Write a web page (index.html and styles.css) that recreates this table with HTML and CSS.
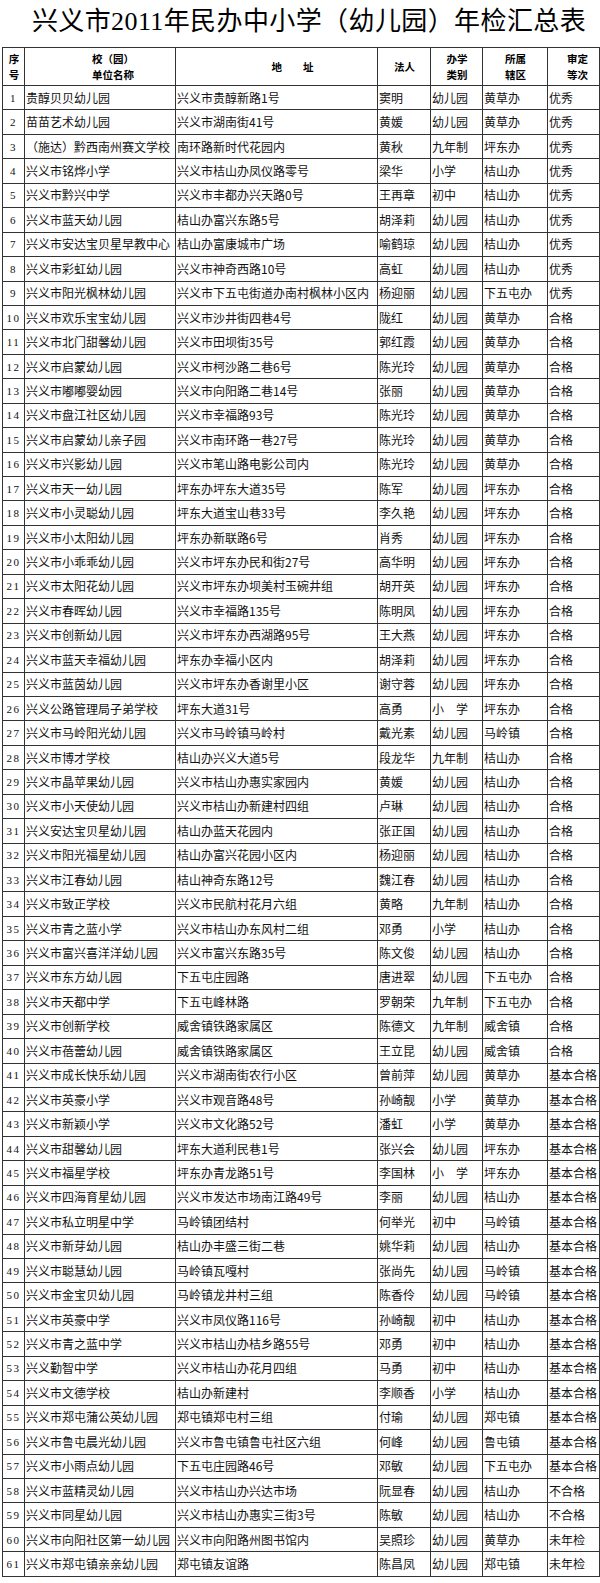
FILE: index.html
```html
<!DOCTYPE html>
<html lang="zh-CN">
<head>
<meta charset="utf-8">
<title>兴义市2011年民办中小学（幼儿园）年检汇总表</title>
<link rel="stylesheet" href="styles.css">
</head>
<body>
<div class="page">
<h1 class="title">兴义市2011年民办中小学（幼儿园）年检汇总表</h1>
<table class="sheet">
<colgroup>
<col class="c-no"><col class="c-name"><col class="c-addr"><col class="c-rep"><col class="c-type"><col class="c-area"><col class="c-grade">
</colgroup>
<thead>
<tr>
<th>序<br>号</th>
<th class="h-name">校（园）<br>单位名称</th>
<th class="h-addr">地　　址</th>
<th>法人</th>
<th>办学<br>类别</th>
<th>所属<br>辖区</th>
<th class="h-grade">审定<br>等次</th>
</tr>
</thead>
<tbody>
<tr><td class="no">1</td><td>贵醇贝贝幼儿园</td><td>兴义市贵醇新路1号</td><td>窦明</td><td>幼儿园</td><td>黄草办</td><td>优秀</td></tr>
<tr><td class="no">2</td><td>苗苗艺术幼儿园</td><td>兴义市湖南街41号</td><td>黄媛</td><td>幼儿园</td><td>黄草办</td><td>优秀</td></tr>
<tr><td class="no">3</td><td>（施达）黔西南州赛文学校</td><td>南环路新时代花园内</td><td>黄秋</td><td>九年制</td><td>坪东办</td><td>优秀</td></tr>
<tr><td class="no">4</td><td>兴义市铭烨小学</td><td>兴义市桔山办凤仪路零号</td><td>梁华</td><td>小学</td><td>桔山办</td><td>优秀</td></tr>
<tr><td class="no">5</td><td>兴义市黔兴中学</td><td>兴义市丰都办兴天路0号</td><td>王再章</td><td>初中</td><td>桔山办</td><td>优秀</td></tr>
<tr><td class="no">6</td><td>兴义市蓝天幼儿园</td><td>桔山办富兴东路5号</td><td>胡泽莉</td><td>幼儿园</td><td>桔山办</td><td>优秀</td></tr>
<tr><td class="no">7</td><td>兴义市安达宝贝星早教中心</td><td>桔山办富康城市广场</td><td>喻鹤琼</td><td>幼儿园</td><td>桔山办</td><td>优秀</td></tr>
<tr><td class="no">8</td><td>兴义市彩虹幼儿园</td><td>兴义市神奇西路10号</td><td>高虹</td><td>幼儿园</td><td>桔山办</td><td>优秀</td></tr>
<tr><td class="no">9</td><td>兴义市阳光枫林幼儿园</td><td>兴义市下五屯街道办南村枫林小区内</td><td>杨迎丽</td><td>幼儿园</td><td>下五屯办</td><td>优秀</td></tr>
<tr><td class="no">10</td><td>兴义市欢乐宝宝幼儿园</td><td>兴义市沙井街四巷4号</td><td>陇红</td><td>幼儿园</td><td>黄草办</td><td>合格</td></tr>
<tr><td class="no">11</td><td>兴义市北门甜馨幼儿园</td><td>兴义市田坝街35号</td><td>郭红霞</td><td>幼儿园</td><td>黄草办</td><td>合格</td></tr>
<tr><td class="no">12</td><td>兴义市启蒙幼儿园</td><td>兴义市柯沙路二巷6号</td><td>陈光玲</td><td>幼儿园</td><td>黄草办</td><td>合格</td></tr>
<tr><td class="no">13</td><td>兴义市嘟嘟婴幼园</td><td>兴义市向阳路二巷14号</td><td>张丽</td><td>幼儿园</td><td>黄草办</td><td>合格</td></tr>
<tr><td class="no">14</td><td>兴义市盘江社区幼儿园</td><td>兴义市幸福路93号</td><td>陈光玲</td><td>幼儿园</td><td>黄草办</td><td>合格</td></tr>
<tr><td class="no">15</td><td>兴义市启蒙幼儿亲子园</td><td>兴义市南环路一巷27号</td><td>陈光玲</td><td>幼儿园</td><td>黄草办</td><td>合格</td></tr>
<tr><td class="no">16</td><td>兴义市兴影幼儿园</td><td>兴义市笔山路电影公司内</td><td>陈光玲</td><td>幼儿园</td><td>黄草办</td><td>合格</td></tr>
<tr><td class="no">17</td><td>兴义市天一幼儿园</td><td>坪东办坪东大道35号</td><td>陈军</td><td>幼儿园</td><td>坪东办</td><td>合格</td></tr>
<tr><td class="no">18</td><td>兴义市小灵聪幼儿园</td><td>坪东大道宝山巷33号</td><td>李久艳</td><td>幼儿园</td><td>坪东办</td><td>合格</td></tr>
<tr><td class="no">19</td><td>兴义市小太阳幼儿园</td><td>坪东办新联路6号</td><td>肖秀</td><td>幼儿园</td><td>坪东办</td><td>合格</td></tr>
<tr><td class="no">20</td><td>兴义市小乖乖幼儿园</td><td>兴义市坪东办民和街27号</td><td>高华明</td><td>幼儿园</td><td>坪东办</td><td>合格</td></tr>
<tr><td class="no">21</td><td>兴义市太阳花幼儿园</td><td>兴义市坪东办坝美村玉碗井组</td><td>胡开英</td><td>幼儿园</td><td>坪东办</td><td>合格</td></tr>
<tr><td class="no">22</td><td>兴义市春晖幼儿园</td><td>兴义市幸福路135号</td><td>陈明凤</td><td>幼儿园</td><td>坪东办</td><td>合格</td></tr>
<tr><td class="no">23</td><td>兴义市创新幼儿园</td><td>兴义市坪东办西湖路95号</td><td>王大燕</td><td>幼儿园</td><td>坪东办</td><td>合格</td></tr>
<tr><td class="no">24</td><td>兴义市蓝天幸福幼儿园</td><td>坪东办幸福小区内</td><td>胡泽莉</td><td>幼儿园</td><td>坪东办</td><td>合格</td></tr>
<tr><td class="no">25</td><td>兴义市蓝茵幼儿园</td><td>兴义市坪东办香谢里小区</td><td>谢守蓉</td><td>幼儿园</td><td>坪东办</td><td>合格</td></tr>
<tr><td class="no">26</td><td>兴义公路管理局子弟学校</td><td>坪东大道31号</td><td>高勇</td><td>小　学</td><td>坪东办</td><td>合格</td></tr>
<tr><td class="no">27</td><td>兴义市马岭阳光幼儿园</td><td>兴义市马岭镇马岭村</td><td>戴光素</td><td>幼儿园</td><td>马岭镇</td><td>合格</td></tr>
<tr><td class="no">28</td><td>兴义市博才学校</td><td>桔山办兴义大道5号</td><td>段龙华</td><td>九年制</td><td>桔山办</td><td>合格</td></tr>
<tr><td class="no">29</td><td>兴义市晶苹果幼儿园</td><td>兴义市桔山办惠实家园内</td><td>黄媛</td><td>幼儿园</td><td>桔山办</td><td>合格</td></tr>
<tr><td class="no">30</td><td>兴义市小天使幼儿园</td><td>兴义市桔山办新建村四组</td><td>卢琳</td><td>幼儿园</td><td>桔山办</td><td>合格</td></tr>
<tr><td class="no">31</td><td>兴义安达宝贝星幼儿园</td><td>桔山办蓝天花园内</td><td>张正国</td><td>幼儿园</td><td>桔山办</td><td>合格</td></tr>
<tr><td class="no">32</td><td>兴义市阳光福星幼儿园</td><td>桔山办富兴花园小区内</td><td>杨迎丽</td><td>幼儿园</td><td>桔山办</td><td>合格</td></tr>
<tr><td class="no">33</td><td>兴义市江春幼儿园</td><td>桔山神奇东路12号</td><td>魏江春</td><td>幼儿园</td><td>桔山办</td><td>合格</td></tr>
<tr><td class="no">34</td><td>兴义市致正学校</td><td>兴义市民航村花月六组</td><td>黄略</td><td>九年制</td><td>桔山办</td><td>合格</td></tr>
<tr><td class="no">35</td><td>兴义市青之蓝小学</td><td>兴义市桔山办东风村二组</td><td>邓勇</td><td>小学</td><td>桔山办</td><td>合格</td></tr>
<tr><td class="no">36</td><td>兴义市富兴喜洋洋幼儿园</td><td>兴义市富兴东路35号</td><td>陈文俊</td><td>幼儿园</td><td>桔山办</td><td>合格</td></tr>
<tr><td class="no">37</td><td>兴义市东方幼儿园</td><td>下五屯庄园路</td><td>唐进翠</td><td>幼儿园</td><td>下五屯办</td><td>合格</td></tr>
<tr><td class="no">38</td><td>兴义市天都中学</td><td>下五屯峰林路</td><td>罗朝荣</td><td>九年制</td><td>下五屯办</td><td>合格</td></tr>
<tr><td class="no">39</td><td>兴义市创新学校</td><td>威舍镇铁路家属区</td><td>陈德文</td><td>九年制</td><td>威舍镇</td><td>合格</td></tr>
<tr><td class="no">40</td><td>兴义市蓓蕾幼儿园</td><td>威舍镇铁路家属区</td><td>王立昆</td><td>幼儿园</td><td>威舍镇</td><td>合格</td></tr>
<tr><td class="no">41</td><td>兴义市成长快乐幼儿园</td><td>兴义市湖南街农行小区</td><td>曾前萍</td><td>幼儿园</td><td>黄草办</td><td>基本合格</td></tr>
<tr><td class="no">42</td><td>兴义市英豪小学</td><td>兴义市观音路48号</td><td>孙崎靓</td><td>小学</td><td>黄草办</td><td>基本合格</td></tr>
<tr><td class="no">43</td><td>兴义市新颖小学</td><td>兴义市文化路52号</td><td>潘虹</td><td>小学</td><td>黄草办</td><td>基本合格</td></tr>
<tr><td class="no">44</td><td>兴义市甜馨幼儿园</td><td>坪东大道利民巷1号</td><td>张兴会</td><td>幼儿园</td><td>坪东办</td><td>基本合格</td></tr>
<tr><td class="no">45</td><td>兴义市福星学校</td><td>坪东办青龙路51号</td><td>李国林</td><td>小　学</td><td>坪东办</td><td>基本合格</td></tr>
<tr><td class="no">46</td><td>兴义市四海育星幼儿园</td><td>兴义市发达市场南江路49号</td><td>李丽</td><td>幼儿园</td><td>桔山办</td><td>基本合格</td></tr>
<tr><td class="no">47</td><td>兴义市私立明星中学</td><td>马岭镇团结村</td><td>何举光</td><td>初中</td><td>马岭镇</td><td>基本合格</td></tr>
<tr><td class="no">48</td><td>兴义市新芽幼儿园</td><td>桔山办丰盛三街二巷</td><td>姚华莉</td><td>幼儿园</td><td>桔山办</td><td>基本合格</td></tr>
<tr><td class="no">49</td><td>兴义市聪慧幼儿园</td><td>马岭镇瓦嘎村</td><td>张尚先</td><td>幼儿园</td><td>马岭镇</td><td>基本合格</td></tr>
<tr><td class="no">50</td><td>兴义市金宝贝幼儿园</td><td>马岭镇龙井村三组</td><td>陈香伶</td><td>幼儿园</td><td>马岭镇</td><td>基本合格</td></tr>
<tr><td class="no">51</td><td>兴义市英豪中学</td><td>兴义市凤仪路116号</td><td>孙崎靓</td><td>初中</td><td>桔山办</td><td>基本合格</td></tr>
<tr><td class="no">52</td><td>兴义市青之蓝中学</td><td>兴义市桔山办桔乡路55号</td><td>邓勇</td><td>初中</td><td>桔山办</td><td>基本合格</td></tr>
<tr><td class="no">53</td><td>兴义勤智中学</td><td>兴义市桔山办花月四组</td><td>马勇</td><td>初中</td><td>桔山办</td><td>基本合格</td></tr>
<tr><td class="no">54</td><td>兴义市文德学校</td><td>桔山办新建村</td><td>李顺香</td><td>小学</td><td>桔山办</td><td>基本合格</td></tr>
<tr><td class="no">55</td><td>兴义市郑屯蒲公英幼儿园</td><td>郑屯镇郑屯村三组</td><td>付瑜</td><td>幼儿园</td><td>郑屯镇</td><td>基本合格</td></tr>
<tr><td class="no">56</td><td>兴义市鲁屯晨光幼儿园</td><td>兴义市鲁屯镇鲁屯社区六组</td><td>何峰</td><td>幼儿园</td><td>鲁屯镇</td><td>基本合格</td></tr>
<tr><td class="no">57</td><td>兴义市小雨点幼儿园</td><td>下五屯庄园路46号</td><td>邓敏</td><td>幼儿园</td><td>下五屯办</td><td>基本合格</td></tr>
<tr><td class="no">58</td><td>兴义市蓝精灵幼儿园</td><td>兴义市桔山办兴达市场</td><td>阮显春</td><td>幼儿园</td><td>桔山办</td><td>不合格</td></tr>
<tr><td class="no">59</td><td>兴义市同星幼儿园</td><td>兴义市桔山办惠实三街3号</td><td>陈敏</td><td>幼儿园</td><td>桔山办</td><td>不合格</td></tr>
<tr><td class="no">60</td><td>兴义市向阳社区第一幼儿园</td><td>兴义市向阳路州图书馆内</td><td>吴照珍</td><td>幼儿园</td><td>黄草办</td><td>未年检</td></tr>
<tr><td class="no">61</td><td>兴义市郑屯镇亲亲幼儿园</td><td>郑屯镇友谊路</td><td>陈昌凤</td><td>幼儿园</td><td>郑屯镇</td><td>未年检</td></tr>
</tbody>
</table>
</div>
</body>
</html>
```

FILE: styles.css
```css
html, body {
  margin: 0;
  padding: 0;
  background: #ffffff;
}

body {
  font-family: "Noto Sans CJK SC", sans-serif;
  color: #111111;
}

.page {
  width: 600px;
}

.title {
  margin: 0;
  height: 47px;
  padding-left: 18px;
  font-family: "Liberation Serif", "Noto Sans CJK SC", serif;
  font-size: 26px;
  font-weight: normal;
  line-height: 44px;
  letter-spacing: 0.4px;
  text-align: center;
  color: #000000;
}

.sheet {
  margin-left: 2px;
  width: 597px;
  border-collapse: collapse;
  table-layout: fixed;
}

.c-no { width: 22px; }
.c-name { width: 151px; }
.c-addr { width: 202px; }
.c-rep { width: 53px; }
.c-type { width: 52px; }
.c-area { width: 65px; }
.c-grade { width: 52px; }

.sheet th,
.sheet td {
  border: 1px solid #333333;
  padding: 0 0 0 1px;
  font-size: 12px;
  line-height: 14px;
  white-space: nowrap;
  overflow: hidden;
  text-align: left;
  vertical-align: middle;
}

.sheet thead tr {
  height: 38px;
}

.sheet tbody tr {
  height: 24.44px;
}

.sheet th {
  font-size: 10.5px;
  font-weight: bold;
  line-height: 15.4px;
  text-align: center;
  color: #000000;
}

.sheet th.h-name {
  padding-left: 26px;
}

.sheet th.h-addr {
  padding-left: 32px;
}

.sheet th.h-grade {
  padding-left: 8px;
}

.sheet td.no {
  padding: 0;
  font-family: "Liberation Serif", serif;
  font-size: 11px;
  letter-spacing: 1.5px;
  text-align: center;
}
```
